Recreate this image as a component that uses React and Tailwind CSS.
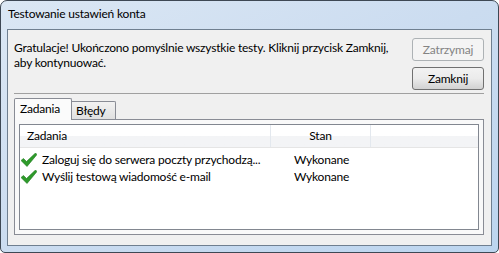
import React from 'react';

const font = { fontFamily: 'Lato, "Open Sans", sans-serif' };

const Check = () => (
    <svg width="16" height="14" viewBox="0 0 16 14" className="shrink-0">
        <polygon points="0,7.5 2.5,5.5 5.5,8.5 14.5,0 16,1.5 6,13.5" fill="#2e9a2a" stroke="#1d7a1d" strokeWidth="0.6" strokeLinejoin="round" />
    </svg>
);

const rows = [
    { task: 'Zaloguj się do serwera poczty przychodzą...', state: 'Wykonane' },
    { task: 'Wyślij testową wiadomość e-mail', state: 'Wykonane' },
];

const App = () => {
    return (
        <div className="w-[499px] h-[253px] bg-white text-[12px] tracking-[-0.2px] text-black" style={font}>
            <div className="w-full h-full flex flex-col rounded-t-[7px] rounded-b-[5px] border border-[#3e4854] bg-gradient-to-br from-[#dbe7f4] via-[#cbdcf0] to-[#bcd5ef] px-[6px] pb-[6px]">
                {/* Title bar */}
                <div className="h-[28px] flex items-center pl-[1px] pb-[2px] leading-none whitespace-nowrap">
                    Testowanie ustawień konta
                </div>

                {/* Client area */}
                <div className="flex-1 flex flex-col border border-[#6f7f90] bg-[#f0f0f0]">
                    {/* Message + buttons */}
                    <div className="flex items-start pt-[8px] pl-[6px] pr-[7px]">
                        <p className="flex-1 mt-[2px] leading-[15px] whitespace-nowrap">
                            Gratulacje! Ukończono pomyślnie wszystkie testy. Kliknij przycisk Zamknij,
                            <br />
                            aby kontynuować.
                        </p>
                        <div className="flex flex-col gap-[6px] w-[72px]">
                            <div className="h-[23px] flex items-center justify-center rounded-[3px] border border-[#adb2b5] bg-[#f4f4f4] text-[#838383]">
                                Zatrzymaj
                            </div>
                            <div className="h-[23px] flex items-center justify-center rounded-[3px] border border-[#707070] bg-gradient-to-b from-[#f2f2f2] via-[#ebebeb] to-[#d2d2d2]">
                                Zamknij
                            </div>
                        </div>
                    </div>

                    {/* Separator */}
                    <div className="mt-[3px] ml-[6px] mr-[7px] h-px bg-[#a0a0a0]" />

                    {/* Tabs */}
                    <div className="mt-[4px] ml-[6px] mr-[7px] flex-1 mb-[10px] flex flex-col">
                        <div className="h-[21px] flex items-end whitespace-nowrap">
                            <div className="relative z-10 h-[22px] -mb-px w-[58px] border border-b-0 border-[#898c95] bg-[#fbfbfb] rounded-t-[2px] pl-[5px] pt-[2px] leading-[16px]">
                                Zadania
                            </div>
                            <div className="h-[18px] w-[44px] border border-l-0 border-b-0 border-[#898c95] bg-gradient-to-b from-[#f2f2f2] to-[#e0e0e0] rounded-tr-[2px] pl-[4px] leading-[17px]">
                                Błędy
                            </div>
                        </div>
                        <div className="flex-1 border border-[#898c95] bg-[#f9f9f9] p-[4px] flex">
                            <div className="flex-1 border border-[#828790] bg-white flex flex-col">
                                {/* Header */}
                                <div className="h-[23px] flex bg-gradient-to-b from-white from-50% to-[#f3f4f6] to-50% border-b border-[#e5e5e5]">
                                    <div className="w-[251px] pl-[7px] flex items-center border-r border-[#e3e8ee]">Zadania</div>
                                    <div className="w-[100px] flex items-center justify-center border-r border-[#e3e8ee]">Stan</div>
                                    <div className="flex-1" />
                                </div>
                                <div className="pt-[3px]">
                                    {rows.map((r) => (
                                        <div key={r.task} className="h-[17px] flex items-center">
                                            <div className="w-[251px] pl-[1px] flex items-center gap-[5px] whitespace-nowrap overflow-hidden">
                                                <Check />
                                                <span>{r.task}</span>
                                            </div>
                                            <div className="w-[101px] text-center">{r.state}</div>
                                        </div>
                                    ))}
                                </div>
                            </div>
                        </div>
                    </div>
                </div>
            </div>
        </div>
    );
};

export default App;
